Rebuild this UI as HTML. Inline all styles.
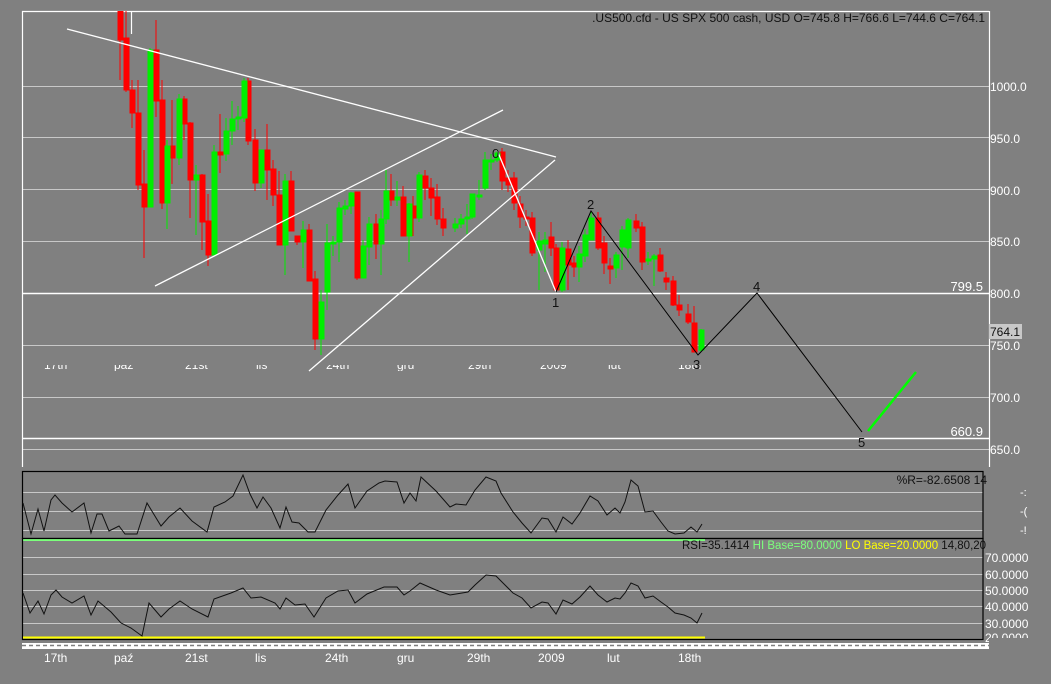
<!DOCTYPE html>
<html><head><meta charset="utf-8"><style>
html,body{margin:0;padding:0;background:#808080;width:1051px;height:684px;overflow:hidden}
svg{display:block}
text{font-family:"Liberation Sans",sans-serif}
</style></head><body>
<svg width="1051" height="684" viewBox="0 0 1051 684" xmlns="http://www.w3.org/2000/svg">
<defs><clipPath id="dc"><rect x="22" y="365" width="700" height="6"/></clipPath>
<clipPath id="mc"><rect x="22" y="11" width="967" height="456"/></clipPath></defs>
<rect width="1051" height="684" fill="#808080"/>
<g stroke="#c8c8c8" stroke-width="1">
<line x1="22" y1="86.5" x2="989" y2="86.5"/><line x1="22" y1="137.5" x2="989" y2="137.5"/>
<line x1="22" y1="189.5" x2="989" y2="189.5"/><line x1="22" y1="241.5" x2="989" y2="241.5"/>
<line x1="22" y1="345.5" x2="989" y2="345.5"/><line x1="22" y1="397.5" x2="989" y2="397.5"/>
<line x1="22" y1="449.5" x2="989" y2="449.5"/>
</g>
<g stroke="#fff" stroke-width="1.5">
<line x1="22" y1="293.5" x2="989" y2="293.5"/><line x1="22" y1="438.5" x2="989" y2="438.5"/>
</g>
<g stroke="#fff" stroke-width="1.2" fill="none">
<line x1="22.5" y1="11" x2="22.5" y2="467"/><line x1="22" y1="11.5" x2="989" y2="11.5"/>
<line x1="989.5" y1="11" x2="989.5" y2="467"/>
<line x1="131.5" y1="11" x2="131.5" y2="34"/>
</g>
<g clip-path="url(#dc)" fill="#fff" font-size="12">
<text x="44" y="369">17th</text><text x="114" y="369">paź</text><text x="185" y="369">21st</text>
<text x="256" y="369">lis</text><text x="326" y="369">24th</text><text x="397" y="369">gru</text>
<text x="468" y="369">29th</text><text x="540" y="369">2009</text><text x="608" y="369">lut</text><text x="678" y="369">18th</text>
</g>
<g clip-path="url(#mc)">
<g stroke-width="1">
<g stroke="#f00" fill="#f00">
<line x1="120" y1="5" x2="120" y2="80"/><rect x="118" y="11" width="5" height="29"/>
<line x1="126" y1="11" x2="126" y2="92"/><rect x="124" y="38" width="5" height="52"/>
<line x1="132" y1="80" x2="132" y2="128"/><rect x="130" y="90" width="5" height="23"/>
<line x1="138" y1="80" x2="138" y2="190"/><rect x="136" y="113" width="5" height="72"/>
<line x1="144" y1="150" x2="144" y2="258"/><rect x="142" y="184" width="5" height="23"/>
<line x1="156" y1="20" x2="156" y2="117"/><rect x="154" y="50" width="5" height="51"/>
<line x1="162" y1="80" x2="162" y2="209"/><rect x="160" y="100" width="5" height="103"/>
<line x1="172" y1="100" x2="172" y2="184"/><rect x="170" y="146" width="5" height="12"/>
<line x1="184" y1="96" x2="184" y2="140"/><rect x="182" y="99" width="5" height="25"/>
<line x1="190" y1="122" x2="190" y2="218"/><rect x="188" y="123" width="5" height="57"/>
<line x1="202" y1="174" x2="202" y2="250"/><rect x="200" y="175" width="5" height="47"/>
<line x1="208" y1="194" x2="208" y2="266"/><rect x="206" y="221" width="5" height="34"/>
<line x1="220" y1="114" x2="220" y2="173"/><rect x="218" y="152" width="5" height="3"/>
<line x1="248" y1="78" x2="248" y2="145"/><rect x="246" y="81" width="5" height="60"/>
<line x1="255" y1="129" x2="255" y2="191"/><rect x="253" y="140" width="5" height="43"/>
<line x1="267" y1="124" x2="267" y2="200"/><rect x="265" y="150" width="5" height="20"/>
<line x1="273" y1="160" x2="273" y2="206"/><rect x="271" y="169" width="5" height="26"/>
<line x1="279" y1="171" x2="279" y2="245"/><rect x="277" y="195" width="5" height="50"/>
<line x1="291" y1="171" x2="291" y2="231"/><rect x="289" y="181" width="5" height="50"/>
<line x1="297" y1="236" x2="297" y2="245"/><rect x="295" y="236" width="5" height="6"/>
<line x1="309" y1="224" x2="309" y2="281"/><rect x="307" y="230" width="5" height="51"/>
<line x1="315" y1="271" x2="315" y2="350"/><rect x="313" y="279" width="5" height="60"/>
<line x1="357" y1="192" x2="357" y2="280"/><rect x="355" y="192" width="5" height="86"/>
<line x1="376" y1="214" x2="376" y2="259"/><rect x="374" y="224" width="5" height="20"/>
<line x1="391" y1="174" x2="391" y2="206"/><rect x="389" y="191" width="5" height="9"/>
<line x1="403" y1="186" x2="403" y2="236"/><rect x="401" y="197" width="5" height="39"/>
<line x1="413" y1="196" x2="413" y2="236"/><rect x="411" y="206" width="5" height="12"/>
<line x1="425" y1="170" x2="425" y2="200"/><rect x="423" y="176" width="5" height="12"/>
<line x1="431" y1="178" x2="431" y2="216"/><rect x="429" y="188" width="5" height="10"/>
<line x1="437" y1="184" x2="437" y2="225"/><rect x="435" y="197" width="5" height="22"/>
<line x1="443" y1="208" x2="443" y2="236"/><rect x="441" y="219" width="5" height="9"/>
<line x1="502" y1="148" x2="502" y2="190"/><rect x="500" y="152" width="5" height="29"/>
<line x1="508" y1="170" x2="508" y2="192"/><rect x="506" y="178" width="5" height="7"/>
<line x1="514" y1="172" x2="514" y2="210"/><rect x="512" y="178" width="5" height="25"/>
<line x1="520" y1="196" x2="520" y2="228"/><rect x="518" y="204" width="5" height="13"/>
<line x1="526" y1="210" x2="526" y2="226"/><rect x="524" y="217" width="5" height="2"/>
<line x1="532" y1="212" x2="532" y2="256"/><rect x="530" y="218" width="5" height="35"/>
<line x1="551" y1="222" x2="551" y2="256"/><rect x="549" y="237" width="5" height="11"/>
<line x1="556" y1="244" x2="556" y2="292"/><rect x="554" y="248" width="5" height="42"/>
<line x1="568" y1="240" x2="568" y2="290"/><rect x="566" y="249" width="5" height="16"/>
<line x1="574" y1="256" x2="574" y2="277"/><rect x="572" y="263" width="5" height="4"/>
<line x1="598" y1="212" x2="598" y2="250"/><rect x="596" y="218" width="5" height="30"/>
<line x1="604" y1="236" x2="604" y2="274"/><rect x="602" y="243" width="5" height="20"/>
<line x1="610" y1="258" x2="610" y2="284"/><rect x="608" y="266" width="5" height="3"/>
<line x1="636" y1="214" x2="636" y2="232"/><rect x="634" y="221" width="5" height="7"/>
<line x1="642" y1="222" x2="642" y2="270"/><rect x="640" y="227" width="5" height="35"/>
<line x1="660" y1="248" x2="660" y2="272"/><rect x="658" y="255" width="5" height="16"/>
<line x1="666" y1="272" x2="666" y2="290"/><rect x="664" y="278" width="5" height="4"/>
<line x1="673" y1="276" x2="673" y2="306"/><rect x="671" y="281" width="5" height="24"/>
<line x1="679" y1="295" x2="679" y2="316"/><rect x="677" y="305" width="5" height="5"/>
<line x1="688" y1="304" x2="688" y2="324"/><rect x="686" y="314" width="5" height="8"/>
<line x1="694" y1="306" x2="694" y2="352"/><rect x="692" y="323" width="5" height="29"/>
</g>
<g stroke="#00ee00" fill="#00ee00">
<line x1="150" y1="48" x2="150" y2="207"/><rect x="148" y="50" width="5" height="157"/>
<line x1="167" y1="140" x2="167" y2="229"/><rect x="165" y="146" width="5" height="57"/>
<line x1="179" y1="94" x2="179" y2="165"/><rect x="177" y="99" width="5" height="59"/>
<line x1="196" y1="165" x2="196" y2="235"/><rect x="194" y="175" width="5" height="5"/>
<line x1="214" y1="145" x2="214" y2="255"/><rect x="212" y="152" width="5" height="103"/>
<line x1="226" y1="118" x2="226" y2="161"/><rect x="224" y="131" width="5" height="23"/>
<line x1="232" y1="101" x2="232" y2="145"/><rect x="230" y="119" width="5" height="12"/>
<line x1="238" y1="106" x2="238" y2="130"/><rect x="236" y="117" width="5" height="2"/>
<line x1="244" y1="78" x2="244" y2="122"/><rect x="242" y="81" width="5" height="37"/>
<line x1="261" y1="150" x2="261" y2="188"/><rect x="259" y="150" width="5" height="33"/>
<line x1="285" y1="174" x2="285" y2="275"/><rect x="283" y="181" width="5" height="64"/>
<line x1="303" y1="221" x2="303" y2="268"/><rect x="301" y="230" width="5" height="12"/>
<line x1="321" y1="290" x2="321" y2="355"/><rect x="319" y="302" width="5" height="37"/>
<line x1="327" y1="224" x2="327" y2="310"/><rect x="325" y="243" width="5" height="49"/>
<line x1="333" y1="236" x2="333" y2="256"/><rect x="331" y="242" width="5" height="2"/>
<line x1="339" y1="202" x2="339" y2="262"/><rect x="337" y="208" width="5" height="34"/>
<line x1="345" y1="200" x2="345" y2="215"/><rect x="343" y="206" width="5" height="3"/>
<line x1="351" y1="192" x2="351" y2="214"/><rect x="349" y="193" width="5" height="13"/>
<line x1="363" y1="240" x2="363" y2="278"/><rect x="361" y="246" width="5" height="32"/>
<line x1="369" y1="217" x2="369" y2="265"/><rect x="367" y="224" width="5" height="23"/>
<line x1="381" y1="210" x2="381" y2="275"/><rect x="379" y="219" width="5" height="25"/>
<line x1="386" y1="170" x2="386" y2="224"/><rect x="384" y="191" width="5" height="28"/>
<line x1="397" y1="181" x2="397" y2="206"/><rect x="395" y="197" width="5" height="3"/>
<line x1="409" y1="203" x2="409" y2="262"/><rect x="407" y="204" width="5" height="32"/>
<line x1="419" y1="172" x2="419" y2="222"/><rect x="417" y="175" width="5" height="43"/>
<line x1="455" y1="218" x2="455" y2="232"/><rect x="453" y="224" width="5" height="4"/>
<line x1="461" y1="214" x2="461" y2="228"/><rect x="459" y="219" width="5" height="5"/>
<line x1="467" y1="204" x2="467" y2="234"/><rect x="465" y="217" width="5" height="2"/>
<line x1="472" y1="194" x2="472" y2="219"/><rect x="470" y="194" width="5" height="23"/>
<line x1="479" y1="180" x2="479" y2="200"/><rect x="477" y="195" width="5" height="2"/>
<line x1="485" y1="152" x2="485" y2="190"/><rect x="483" y="160" width="5" height="28"/>
<line x1="491" y1="154" x2="491" y2="170"/><rect x="489" y="160" width="5" height="2"/>
<line x1="497" y1="150" x2="497" y2="162"/><rect x="495" y="153" width="5" height="7"/>
<line x1="539" y1="232" x2="539" y2="290"/><rect x="537" y="241" width="5" height="9"/>
<line x1="545" y1="232" x2="545" y2="272"/><rect x="543" y="240" width="5" height="4"/>
<line x1="562" y1="242" x2="562" y2="292"/><rect x="560" y="248" width="5" height="42"/>
<line x1="579" y1="246" x2="579" y2="282"/><rect x="577" y="254" width="5" height="13"/>
<line x1="585" y1="229" x2="585" y2="262"/><rect x="583" y="235" width="5" height="21"/>
<line x1="591" y1="212" x2="591" y2="240"/><rect x="589" y="218" width="5" height="22"/>
<line x1="616" y1="252" x2="616" y2="278"/><rect x="614" y="255" width="5" height="13"/>
<line x1="622" y1="226" x2="622" y2="270"/><rect x="620" y="230" width="5" height="17"/>
<line x1="628" y1="218" x2="628" y2="258"/><rect x="626" y="220" width="5" height="28"/>
<line x1="648" y1="252" x2="648" y2="265"/><rect x="646" y="259" width="5" height="2"/>
<line x1="654" y1="254" x2="654" y2="286"/><rect x="652" y="256" width="5" height="3"/>
<line x1="701" y1="329" x2="701" y2="352"/><rect x="699" y="330" width="5" height="20"/>
</g>
</g>
<g stroke="#fff" stroke-width="1.3" fill="none">
<line x1="67" y1="29" x2="556" y2="157"/>
<line x1="155" y1="286" x2="503" y2="110"/>
<line x1="309" y1="371" x2="555" y2="160"/>
<line x1="497" y1="150" x2="556" y2="292"/>
</g>
<polyline points="556,292 591,211 698,355 757,293 862,432" fill="none" stroke="#000" stroke-width="1"/>
<line x1="868" y1="431" x2="916" y2="372" stroke="#00ff00" stroke-width="2.5"/>
</g>
<g font-size="13" fill="#111">
<text x="492" y="158">0</text><text x="552" y="307">1</text><text x="587" y="209">2</text>
<text x="693" y="369">3</text><text x="753" y="291">4</text><text x="858" y="447">5</text>
</g>
<text x="985" y="22" font-size="12" fill="#111" text-anchor="end">.US500.cfd - US SPX 500 cash, USD O=745.8 H=766.6 L=744.6 C=764.1</text>
<g font-size="12" fill="#fff">
<text x="990" y="91">1000.0</text><text x="990" y="143">950.0</text><text x="990" y="195">900.0</text>
<text x="990" y="246">850.0</text><text x="990" y="298">800.0</text><text x="990" y="350">750.0</text>
<text x="990" y="402">700.0</text><text x="990" y="454">650.0</text>
<text x="983" y="291" text-anchor="end" font-size="13">799.5</text>
<text x="983" y="436" text-anchor="end" font-size="13">660.9</text>
</g>
<rect x="989" y="324" width="33" height="15" fill="#c8c8c8"/>
<text x="990" y="336" font-size="12" fill="#111">764.1</text>
<g stroke="#c8c8c8" stroke-width="1">
<line x1="23" y1="492.5" x2="983" y2="492.5"/><line x1="23" y1="511.5" x2="983" y2="511.5"/><line x1="23" y1="530.5" x2="983" y2="530.5"/>
</g>
<rect x="22.5" y="471.5" width="960.5" height="67" fill="none" stroke="#000" stroke-width="1.2"/>
<polyline fill="none" stroke="#111" stroke-width="1" points="23,503 31,534 38,509 44,531 51,500 55,495 62,503 72,512 84,503 91,533 97,514 102,514 109,531 119,526 125,534 137,534 147,503 161,526 169,517 180,508 192,521 207,532 214,507 225,502 233,496 243,475 250,494 257,508 263,497 271,508 280,528 286,507 292,522 299,523 308,532 315,532 326,510 338,495 348,484 355,508 367,491 379,483 385,481 397,482 404,503 410,493 416,501 421,477 436,491 450,507 456,504 466,505 475,490 486,477 496,481 501,493 513,512 522,523 531,533 542,518 548,519 556,532 563,517 572,524 580,513 590,496 598,501 607,515 615,508 620,513 625,502 631,480 638,486 645,512 653,511 661,522 668,531 675,534 684,533 691,527 697,532 702,524"/>
<text x="987" y="484" font-size="12" fill="#111" text-anchor="end">%R=-82.6508  14</text>
<g font-size="11" fill="#fff"><text x="1020" y="496">-:</text><text x="1020" y="515">-(</text><text x="1020" y="534">-!</text></g>
<line x1="23" y1="540" x2="705" y2="540" stroke="#7cff7c" stroke-width="2"/>
<g stroke="#c8c8c8" stroke-width="1">
<line x1="23" y1="557.5" x2="983" y2="557.5"/><line x1="23" y1="574.5" x2="983" y2="574.5"/><line x1="23" y1="590.5" x2="983" y2="590.5"/>
<line x1="23" y1="606.5" x2="983" y2="606.5"/><line x1="23" y1="623.5" x2="983" y2="623.5"/>
</g>
<rect x="22.5" y="538.5" width="960.5" height="101" fill="none" stroke="#000" stroke-width="1.2"/>
<line x1="23" y1="637.5" x2="705" y2="637.5" stroke="#ffff00" stroke-width="2"/>
<polyline fill="none" stroke="#111" stroke-width="1" points="23,593 30,613 38,601 44,614 51,595 56,590 62,597 72,603 84,596 91,615 98,601 111,612 121,623 131,628 142,636 149,603 161,617 169,609 180,601 192,609 208,617 214,599 231,593 243,588 251,598 261,597 275,603 280,609 286,598 295,605 305,604 314,617 326,598 338,591 348,590 355,603 367,594 384,587 397,587 404,595 410,591 420,583 436,590 450,595 468,592 475,585 486,575 496,576 503,583 513,593 522,598 531,608 542,602 548,603 556,614 563,600 572,604 580,597 590,586 598,595 607,602 615,598 620,599 625,593 631,583 638,586 645,598 653,596 661,602 668,607 675,613 684,615 691,618 697,623 702,613"/>
<text x="682" y="549" font-size="11.5" fill="#111">RSI=35.1414 <tspan fill="#7cff7c">HI Base=80.0000</tspan> <tspan fill="#ffff00">LO Base=20.0000</tspan>  14,80,20</text>
<g font-size="12" fill="#fff">
<text x="985" y="562">70.0000</text><text x="985" y="579">60.0000</text><text x="985" y="595">50.0000</text>
<text x="985" y="611">40.0000</text><text x="985" y="628">30.0000</text><text x="985" y="642">20.0000</text>
</g>
<rect x="989" y="638" width="62" height="8" fill="#808080"/>
<rect x="22" y="643" width="967" height="6" fill="#fff"/>
<line x1="22" y1="645.5" x2="989" y2="645.5" stroke="#808080" stroke-width="1.5" stroke-dasharray="4,3"/>
<g font-size="12" fill="#fff">
<text x="44" y="662">17th</text><text x="114" y="662">paź</text><text x="185" y="662">21st</text>
<text x="255" y="662">lis</text><text x="325" y="662">24th</text><text x="397" y="662">gru</text>
<text x="467" y="662">29th</text><text x="538" y="662">2009</text><text x="607" y="662">lut</text><text x="678" y="662">18th</text>
</g>
</svg>
</body></html>
